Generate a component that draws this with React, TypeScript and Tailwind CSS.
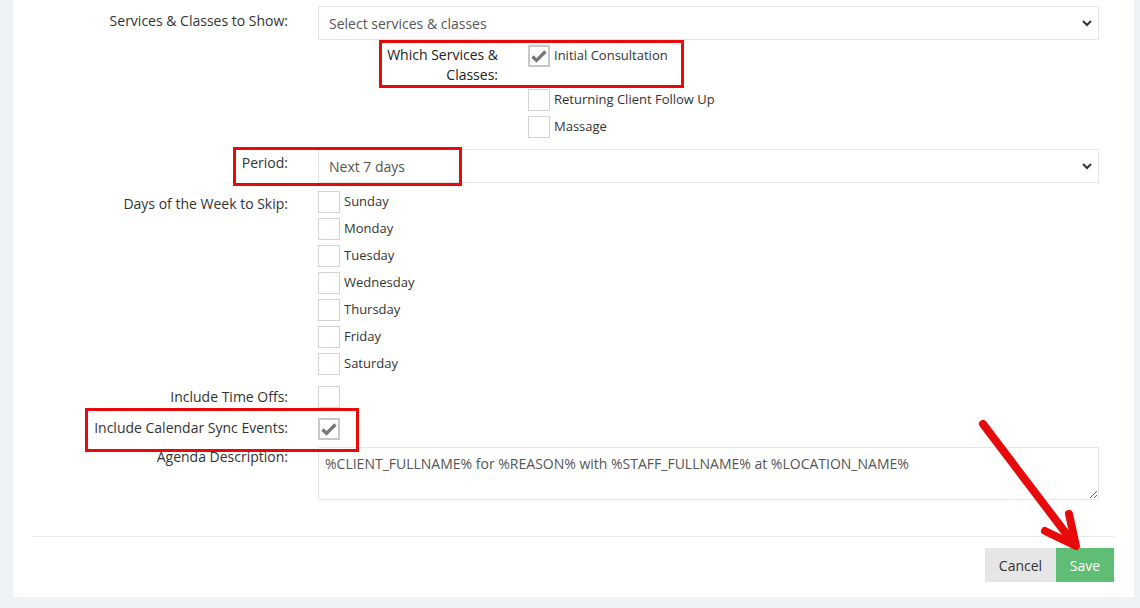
import React from 'react';

const font = { fontFamily: '"Open Sans", "Liberation Sans", sans-serif' };

const Chevron = () => (
  <svg width="10" height="7" viewBox="0 0 10 7" className="text-[#333]">
    <polyline points="1,1 5,5 9,1" fill="none" stroke="currentColor" strokeWidth="2" />
  </svg>
);

const Box = ({ checked = false }: { checked?: boolean }) => (
  <div
    className={
      checked
        ? 'w-[22px] h-[22px] shrink-0 border-2 border-[#c8c8c8] bg-white flex items-center justify-center'
        : 'w-[22px] h-[22px] shrink-0 border border-[#d2d2d2] bg-white'
    }
  >
    {checked && (
      <svg width="16" height="14" viewBox="0 0 16 14">
        <polyline points="1.5,7.5 5.5,11.5 14.5,2.5" fill="none" stroke="#777" strokeWidth="3.2" />
      </svg>
    )}
  </div>
);

const Check = ({ label, checked = false }: { label: string; checked?: boolean }) => (
  <div className="flex items-start gap-[4px]">
    <Box checked={checked} />
    <span className="pt-[1px] text-[13px] leading-[19px] text-[#333]">{label}</span>
  </div>
);

const Select = ({ value }: { value: string }) => (
  <div className="h-[34px] border border-[#e6e6e6] bg-white flex items-center justify-between pl-[10px] pr-[6px] text-[14px] text-[#555]">
    <span>{value}</span>
    <Chevron />
  </div>
);

const Row = ({ label, pt, className = '', children }: { label: string; pt: string; className?: string; children: React.ReactNode }) => (
  <div className={`grid grid-cols-[255px_1fr] gap-x-[30px] ${className}`}>
    <div className={`text-right text-[14px] leading-[20px] text-[#333] ${pt}`}>{label}</div>
    <div>{children}</div>
  </div>
);

export default function App() {
  const days = ['Sunday', 'Monday', 'Tuesday', 'Wednesday', 'Thursday', 'Friday', 'Saturday'];
  return (
    <div className="w-[1140px] h-[608px] bg-[#eef2f6] overflow-hidden" style={font}>
      <div className="relative ml-[13px] w-[1121px] h-[597px] bg-white px-[20px] pt-[6px]">
        <div className="pr-[15px]">
          <Row label="Services & Classes to Show:" pt="pt-[5px]">
            <Select value="Select services & classes" />
            <div className="mt-[5px] pl-[60px] grid grid-cols-[120px_1fr] gap-x-[30px]">
              <div className="text-right text-[14px] leading-[19.5px] text-[#222]">Which Services &amp; Classes:</div>
              <div>
                <div className="h-[39px]">
                  <Check label="Initial Consultation" checked />
                </div>
                <div className="mt-[5px] flex flex-col gap-[5px]">
                  <Check label="Returning Client Follow Up" />
                  <Check label="Massage" />
                </div>
              </div>
            </div>
          </Row>

          <Row label="Period:" pt="pt-[4px]" className="mt-[11px]">
            <Select value="Next 7 days" />
          </Row>

          <Row label="Days of the Week to Skip:" pt="pt-[3px]" className="mt-[8px]">
            <div className="flex flex-col gap-[5px]">
              {days.map(d => (
                <Check key={d} label={d} />
              ))}
            </div>
          </Row>

          <Row label="Include Time Offs:" pt="pt-[1px]" className="mt-[11px]">
            <Box />
          </Row>

          <Row label="Include Calendar Sync Events:" pt="pt-0" className="mt-[10px]">
            <Box checked />
          </Row>

          <Row label="Agenda Description:" pt="pt-0" className="mt-[7px]">
            <textarea
              readOnly
              defaultValue="%CLIENT_FULLNAME% for %REASON% with %STAFF_FULLNAME% at %LOCATION_NAME%"
              className="block w-full h-[53px] border border-[#e6e6e6] px-[6px] py-[6px] text-[14px] leading-[20px] text-[#555] outline-none"
              style={font}
            />
          </Row>
        </div>

        <div className="mt-[36px] h-px bg-[#e9e9e9]" />

        <div className="mt-[11px] flex justify-end">
          <button className="h-[34px] w-[71px] bg-[#e6e6e6] text-[14px] text-[#333]">Cancel</button>
          <button className="h-[34px] w-[58px] bg-[#5fbd75] text-[14px] text-white">Save</button>
        </div>

        {/* annotations */}
        <div className="absolute left-[366px] top-[40px] w-[305px] h-[48px] border-[3px] border-[#e60a0a]" />
        <div className="absolute left-[220px] top-[147px] w-[229px] h-[39px] border-[3px] border-[#e60a0a]" />
        <div className="absolute left-[72px] top-[408px] w-[274px] h-[44px] border-[3px] border-[#e60a0a]" />
        <svg className="absolute left-0 top-0 pointer-events-none" width="1121" height="597">
          <g stroke="#e60a0a" strokeWidth="8" strokeLinecap="round" strokeLinejoin="round" fill="none">
            <line x1="970" y1="424" x2="1061" y2="544" />
            <polyline points="1032,531 1063,546 1056,514" />
          </g>
        </svg>
      </div>
    </div>
  );
}
